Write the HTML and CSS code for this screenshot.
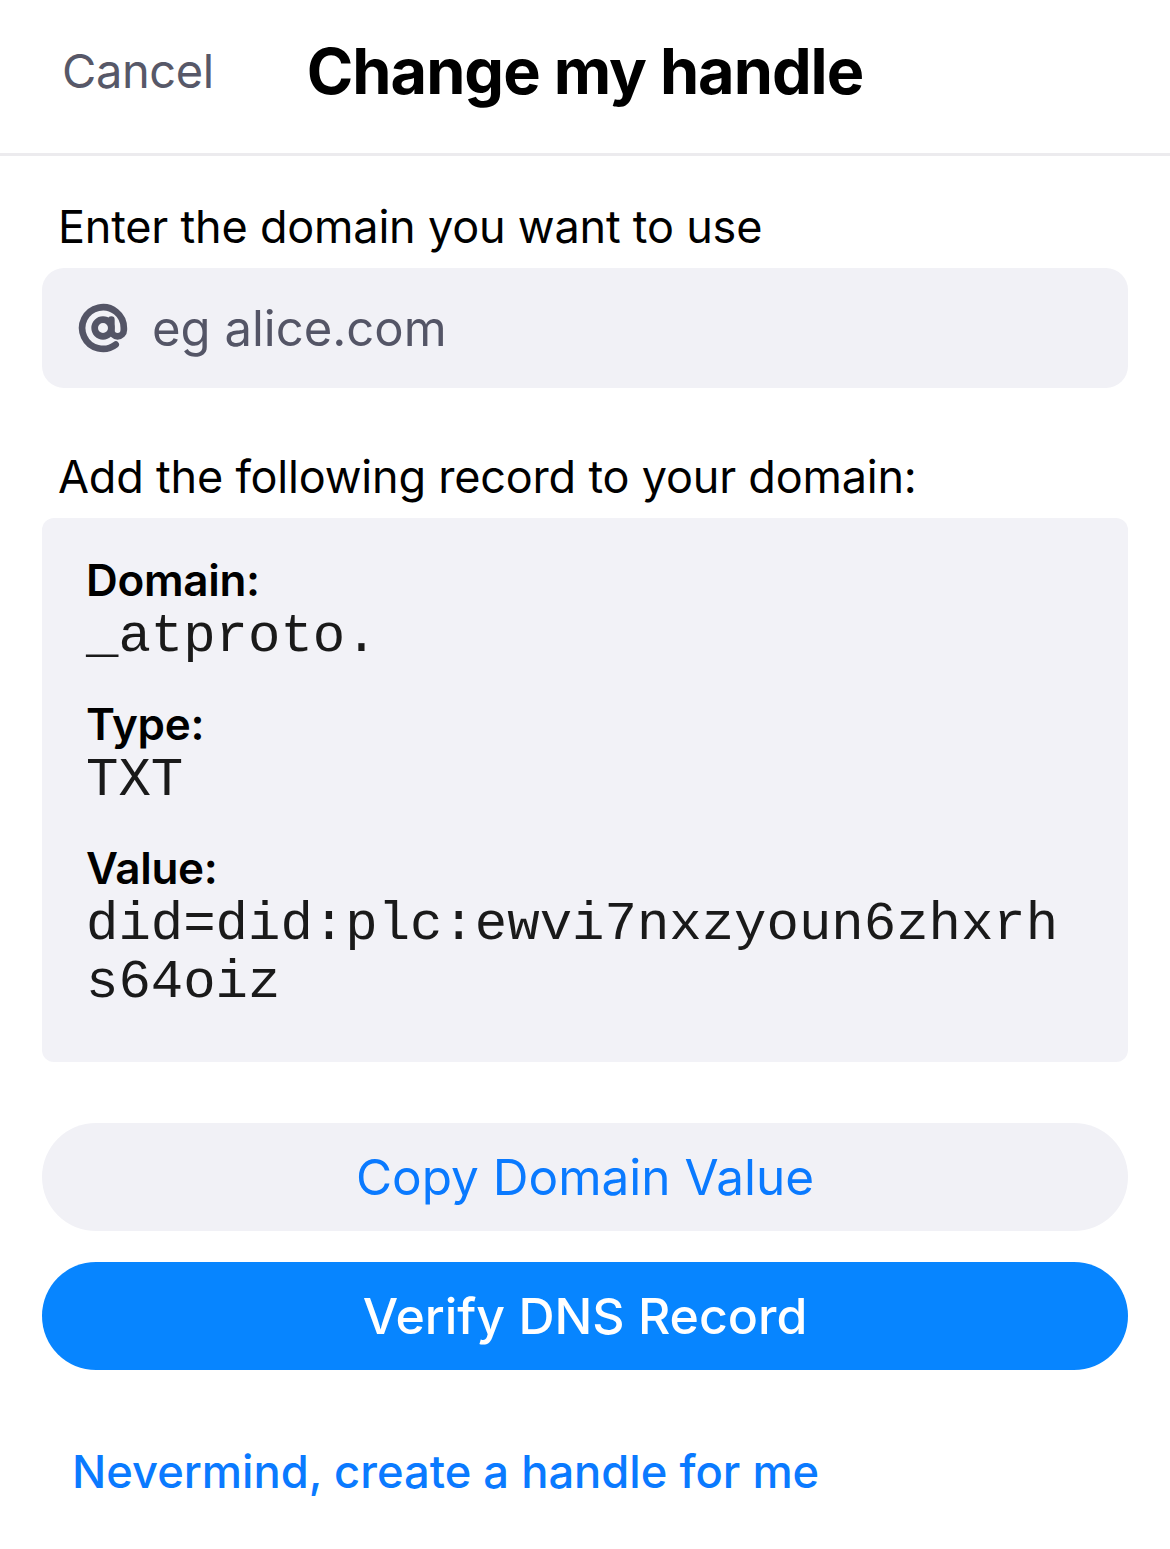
FILE: index.html
```html
<!DOCTYPE html>
<html lang="en">
<head>
  <meta charset="UTF-8">
  <meta name="viewport" content="width=device-width, initial-scale=1.0">
  <title>Change my handle</title>
  <link rel="stylesheet" href="styles.css">
</head>
<body>
  <header class="topbar">
    <a class="cancel">Cancel</a>
    <h1 class="title">Change my handle</h1>
    <span></span>
  </header>

  <main class="content">
    <p class="label">Enter the domain you want to use</p>
    <div class="input-box">
      <svg class="at-icon" viewBox="0 0 24 24" fill="none" stroke="currentColor" stroke-width="3.2" stroke-linecap="round" stroke-linejoin="round">
        <circle cx="12" cy="12" r="4"/>
        <path d="M16 8v5a3 3 0 0 0 6 0v-1a10 10 0 1 0-3.92 7.94"/>
      </svg>
      <span class="placeholder">eg alice.com</span>
    </div>

    <p class="label label-second">Add the following record to your domain:</p>
    <div class="record">
      <div class="record-key">Domain:</div>
      <div class="record-val">_atproto.</div>
      <div class="record-key">Type:</div>
      <div class="record-val">TXT</div>
      <div class="record-key">Value:</div>
      <div class="record-val">did=did:plc:ewvi7nxzyoun6zhxrh<br>s64oiz</div>
    </div>

    <button class="btn btn-light">Copy Domain Value</button>
    <button class="btn btn-primary">Verify DNS Record</button>

    <a class="link">Nevermind, create a handle for me</a>
  </main>
</body>
</html>
```

FILE: styles.css
```css
body {
  margin: 0;
  background: #fff;
  font-family: Inter, "Noto Sans", sans-serif;
  color: #000;
}

.topbar {
  box-sizing: border-box;
  display: grid;
  grid-template-columns: 1fr auto 1fr;
  align-items: center;
  height: 156px;
  padding-bottom: 12px;
  border-bottom: 3px solid #ecebee;
}

.cancel {
  padding-left: 62px;
  font-size: 47px;
  color: #575868;
  letter-spacing: -0.4px;
}

.title {
  margin: 0;
  font-size: 63px;
  font-weight: 700;
  letter-spacing: -1px;
}

.content {
  padding: 0 42px;
  display: flex;
  flex-direction: column;
}

.label {
  margin: 43px 0 13px 16px;
  font-size: 45px;
  line-height: 56px;
  letter-spacing: -0.2px;
}

.label-second {
  margin-top: 61px;
}

.input-box {
  display: flex;
  align-items: center;
  height: 120px;
  background: #f1f1f6;
  border-radius: 22px;
  padding-left: 36px;
  color: #545566;
}

.at-icon {
  width: 50px;
  height: 50px;
  margin-right: 24px;
}

.placeholder {
  font-size: 49px;
}

.record {
  background: #f2f2f7;
  border-radius: 12px;
  padding: 34px 44px 50px;
}

.record-key {
  font-size: 44px;
  font-weight: 600;
  line-height: 56px;
  letter-spacing: -0.3px;
}

.record-val {
  font-family: "Liberation Mono", monospace;
  font-size: 54px;
  line-height: 58px;
  margin-bottom: 30px;
  color: #1a1a1a;
}

.record-val:last-child {
  margin-bottom: 0;
}

.btn {
  height: 108px;
  border: none;
  border-radius: 54px;
  font-family: Inter, "Noto Sans", sans-serif;
  font-size: 49.5px;
  cursor: pointer;
}

.btn-light {
  margin-top: 61px;
  background: #f1f1f6;
  color: #0a7aff;
}

.btn-primary {
  margin-top: 31px;
  background: #0785ff;
  color: #fff;
  font-size: 50px;
  font-weight: 500;
}

.link {
  margin: 74px 0 0 30px;
  font-size: 45.3px;
  font-weight: 500;
  color: #0a7aff;
}
```
